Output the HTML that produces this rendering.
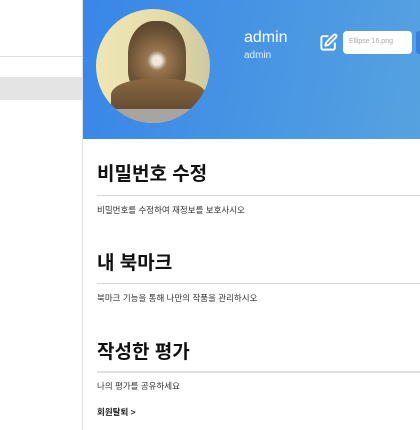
<!DOCTYPE html>
<html><head><meta charset="utf-8"><style>
body{margin:0;width:420px;height:430px;overflow:hidden;background:#fff;font-family:"Liberation Sans","Noto Sans CJK KR",sans-serif;position:relative}
.a{position:absolute}
h2{position:absolute;left:97px;margin:0;font-size:19px;font-weight:bold;color:#111;line-height:1}
.ln{position:absolute;left:97px;right:0;height:1px;background:#d6d6d6}
.d{position:absolute;left:97px;font-size:8.5px;color:#333;line-height:1}
</style></head><body>
<div class="a" style="left:0;top:56px;width:82px;height:1px;background:#ddd"></div>
<div class="a" style="left:0;top:77px;width:82px;height:23px;background:#e4e4e4"></div>
<div class="a" style="left:82px;top:0;width:1px;height:430px;background:#e0e0e0"></div>
<div class="a" style="left:83px;top:0;width:337px;height:139px;background:linear-gradient(100deg,#3886e8,#56a2e0)"></div>
<div class="a" style="left:96px;top:9px;width:114px;height:114px;border-radius:50%;overflow:hidden;background:linear-gradient(90deg,#efe6b6,#e5dca8 60%,#cfc8a0)">
 <div class="a" style="left:32px;top:12px;width:58px;height:72px;border-radius:45% 45% 30% 30%;background:radial-gradient(circle at 50% 55%,#eee8dc 0 9%,#9a7650 20%,#6a5236 60%,#4a3a28)"></div>
 <div class="a" style="left:15px;top:70px;width:95px;height:40px;border-radius:40% 40% 0 0;background:linear-gradient(#8a6840,#5a4530)"></div>
 <div class="a" style="left:0;top:100px;width:114px;height:14px;background:#a8a5a0"></div>
</div>
<div class="a" style="left:244px;top:29px;font-size:16px;color:#fff">admin</div>
<div class="a" style="left:244px;top:50px;font-size:10px;color:#e4eefc">admin</div>
<svg class="a" style="left:319px;top:33px" width="19" height="19" viewBox="0 0 24 24" fill="none" stroke="#fff" stroke-width="2.4" stroke-linecap="round" stroke-linejoin="round"><path d="M11 4H5a2 2 0 0 0-2 2v13a2 2 0 0 0 2 2h13a2 2 0 0 0 2-2v-6"/><path d="M18.5 2.5a2.1 2.1 0 0 1 3 3L12 15l-4 1 1-4z"/></svg>
<div class="a" style="left:343px;top:31px;width:69px;height:23px;background:#fff;border-radius:4px"><span style="position:absolute;left:6px;top:7px;font-size:7px;color:#aaa">Ellipse 16.png</span></div>
<div class="a" style="left:416px;top:31px;width:4px;height:23px;background:#3a7fd8;border-radius:3px 0 0 3px"></div>
<h2 style="top:165px">비밀번호 수정</h2><div class="ln" style="top:195px"></div>
<div class="d" style="top:206px">비밀번호를 수정하여 재정보를 보호사시오</div>
<h2 style="top:254px">내 북마크</h2><div class="ln" style="top:283px"></div>
<div class="d" style="top:294px">북마크 기능을 통해 나만의 작품을 관리하시오</div>
<h2 style="top:343px">작성한 평가</h2><div class="ln" style="top:371px;height:2px;background:#e0e0e0"></div>
<div class="d" style="top:382px">나의 평가를 공유하세요</div>
<div class="d" style="top:408px;font-weight:bold;color:#222">회원탈퇴 &gt;</div>
</body></html>
